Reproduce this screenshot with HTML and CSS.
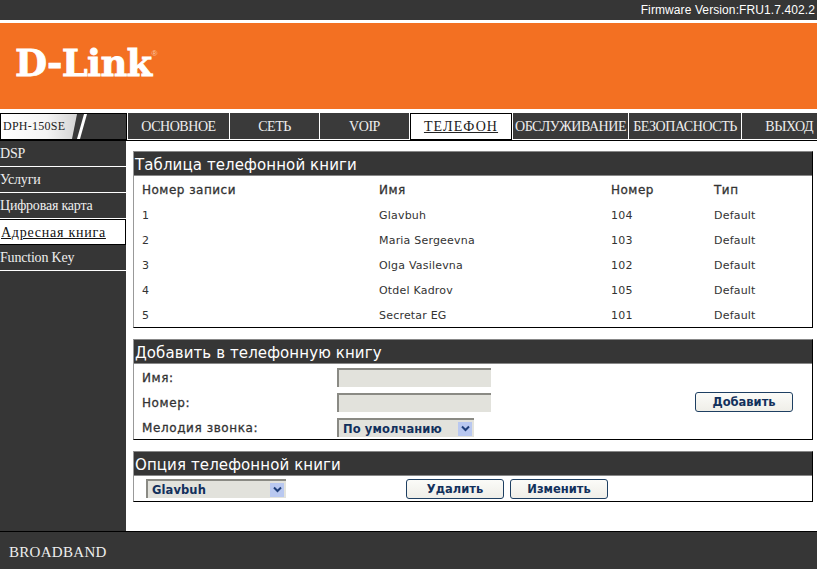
FILE: index.html
```html
<!DOCTYPE html>
<html lang="ru">
<head>
<meta charset="utf-8">
<title>D-Link DPH-150SE</title>
<link rel="stylesheet" href="styles.css">
</head>
<body>
<div class="page">
  <header class="topbar"><span class="firmware">Firmware Version:FRU1.7.402.2</span></header>
  <div class="banner">
    <span class="logo">D-Link<sup class="reg">®</sup></span>
  </div>
  <nav class="navrow">
    <div class="model">
      <svg class="model-art" width="125" height="25" viewBox="0 0 125 25">
        <defs><linearGradient id="modelfade" x1="0" x2="1" y1="0" y2="0"><stop offset="0" stop-color="#fff"/><stop offset=".6" stop-color="#f4f4f4"/><stop offset="1" stop-color="#d4d4d4"/></linearGradient></defs>
        <polygon points="0,0 76,0 71,25 0,25" fill="url(#modelfade)"/>
        <polygon points="83,0 86,0 79,25 76,25" fill="#fff"/>
      </svg>
      <span class="model-name">DPH-150SE</span>
    </div>
    <a class="tab w-a">ОСНОВНОЕ</a>
    <a class="tab w-b">СЕТЬ</a>
    <a class="tab w-c">VOIP</a>
    <a class="tab w-d active">ТЕЛЕФОН</a>
    <a class="tab w-e">ОБСЛУЖИВАНИЕ</a>
    <a class="tab w-f">БЕЗОПАСНОСТЬ</a>
    <a class="tab w-g">ВЫХОД</a>
  </nav>
  <div class="middle">
    <aside class="sidebar">
      <a class="side-item">DSP</a>
      <a class="side-item">Услуги</a>
      <a class="side-item">Цифровая карта</a>
      <a class="side-item current">Адресная книга</a>
      <a class="side-item">Function Key</a>
    </aside>
    <main class="content">
      <section class="panel panel-book">
        <h2 class="panel-title">Таблица телефонной книги</h2>
        <div class="book-row book-head"><span>Номер записи</span><span>Имя</span><span>Номер</span><span>Тип</span></div>
        <div class="book-row"><span>1</span><span>Glavbuh</span><span>104</span><span>Default</span></div>
        <div class="book-row"><span>2</span><span>Maria Sergeevna</span><span>103</span><span>Default</span></div>
        <div class="book-row"><span>3</span><span>Olga Vasilevna</span><span>102</span><span>Default</span></div>
        <div class="book-row"><span>4</span><span>Otdel Kadrov</span><span>105</span><span>Default</span></div>
        <div class="book-row"><span>5</span><span>Secretar EG</span><span>101</span><span>Default</span></div>
      </section>
      <section class="panel panel-add">
        <h2 class="panel-title">Добавить в телефонную книгу</h2>
        <div class="add-body">
          <div class="form-rows">
            <div class="form-row"><label class="form-label">Имя:</label><span class="field"></span></div>
            <div class="form-row"><label class="form-label">Номер:</label><span class="field"></span></div>
            <div class="form-row"><label class="form-label">Мелодия звонка:</label>
              <span class="select select-ring"><span class="select-text">По умолчанию</span><span class="arrow"><svg width="9" height="7" viewBox="0 0 9 7"><path d="M1 1.5 4.5 5 8 1.5" fill="none" stroke="#1f3f7a" stroke-width="2"/></svg></span></span>
            </div>
          </div>
          <button class="btn btn-add" type="button">Добавить</button>
        </div>
      </section>
      <section class="panel panel-opt">
        <h2 class="panel-title">Опция телефонной книги</h2>
        <div class="opt-body">
          <span class="select select-opt"><span class="select-text">Glavbuh</span><span class="arrow"><svg width="9" height="7" viewBox="0 0 9 7"><path d="M1 1.5 4.5 5 8 1.5" fill="none" stroke="#1f3f7a" stroke-width="2"/></svg></span></span>
          <button class="btn btn-del" type="button">Удалить</button>
          <button class="btn btn-edit" type="button">Изменить</button>
        </div>
      </section>
    </main>
  </div>
  <footer class="footer">BROADBAND</footer>
</div>
</body>
</html>
```

FILE: styles.css
```css
* { box-sizing: border-box; }
html, body { margin: 0; padding: 0; background: #fff; }
.page {
  width: 817px;
  height: 569px;
  display: flex;
  flex-direction: column;
  overflow: hidden;
  font-family: "DejaVu Sans", sans-serif;
  color: #333;
}
.topbar {
  height: 20px;
  flex: none;
  background: #363636;
  color: #fff;
  font: 12px/20px "Liberation Sans", sans-serif;
  letter-spacing: .1px;
  text-align: right;
  padding-right: 2px;
}
.banner {
  height: 86px;
  flex: none;
  margin-top: 3px;
  background: #f37022;
  padding: 25px 0 0 15px;
}
.logo {
  display: inline-block;
  color: #fff;
  font: 700 37px/30px "DejaVu Serif", serif;
  letter-spacing: -.7px;
  -webkit-text-stroke: .8px #fff;
}
.reg {
  font: 400 8px/8px "Liberation Sans", sans-serif;
  vertical-align: 20px;
  color: #f9c9a8;
  letter-spacing: 0;
  -webkit-text-stroke: 0;
}
.navrow {
  height: 28px;
  flex: none;
  margin-top: 4px;
  display: flex;
  border-bottom: 1px solid #000;
  font-family: "Liberation Serif", serif;
  font-size: 14px;
  letter-spacing: -.45px;
}
.model {
  width: 127px;
  height: 27px;
  flex: none;
  position: relative;
  background: #3a3a3a;
  border: 1px solid #000;
  overflow: hidden;
}
.model-art { position: absolute; left: 0; top: 0; }
.model-name {
  position: relative;
  display: block;
  padding-left: 2px;
  font: 12px/25px "Liberation Serif", serif;
  letter-spacing: .25px;
  color: #222;
}
.tab {
  height: 26px;
  flex: none;
  background: #3a3a3a;
  color: #eee;
  line-height: 27px;
  text-align: center;
  border-right: 1px solid #fff;
  white-space: nowrap;
}
.tab.active {
  background: #fff;
  color: #222;
  letter-spacing: 1.1px;
  text-decoration: underline;
  border: 1px solid #000;
  line-height: 26px;
  height: 27px;
}
.w-a { width: 102px; margin-left: 1px; }
.w-b { width: 90px; }
.w-c { width: 90px; }
.w-d { width: 102px; }
.w-e { width: 116px; margin-left: 1px; }
.w-f { width: 113px; }
.w-g { flex: 1; text-align: right; padding-right: 4px; border-right: 0; }
.middle { flex: 1; display: flex; min-height: 0; }
.sidebar {
  width: 126px;
  flex: none;
  background: #363636;
  font: 14px/26px "Liberation Serif", serif;
  letter-spacing: -.2px;
  color: #eee;
}
.side-item {
  display: block;
  height: 26px;
  line-height: 26px;
  border-bottom: 1px solid #fff;
  white-space: nowrap;
}
.side-item.current {
  background: #fff;
  color: #111;
  border: 1px solid #000;
  border-left: 0;
  padding-left: 1px;
  letter-spacing: .75px;
  text-decoration: underline;
  line-height: 25px;
}
.content {
  flex: 1;
  padding: 10px 4px 0 7px;
  display: flex;
  flex-direction: column;
  gap: 11px;
}
.panel {
  border: 1px solid #000;
  border-top-color: #888;
  border-left-color: #999;
}
.panel-title {
  margin: 0;
  height: 24px;
  background: #363636;
  color: #fff;
  font: 400 15px/26px "DejaVu Sans", sans-serif;
  letter-spacing: .1px;
  padding-left: 1px;
  border-bottom: 1px solid #888;
}
.panel-book { height: 177px; }
.panel-add { height: 101px; }
.panel-opt { height: 51px; }
.book-row {
  display: grid;
  grid-template-columns: 237px 232px 103px 1fr;
  height: 25px;
  padding-left: 8px;
  font-size: 11px;
  letter-spacing: .2px;
  line-height: 25px;
}
.book-head {
  margin-top: 2px;
  font-size: 12px;
  letter-spacing: .5px;
  -webkit-text-stroke: .3px #333;
}
.add-body { display: flex; }
.form-rows { flex: none; width: 360px; padding-top: 1px; }
.form-row { height: 25px; display: flex; align-items: center; padding-left: 8px; }
.form-label { width: 195px; font-size: 12px; -webkit-text-stroke: .3px #333; letter-spacing: .6px; }
.field {
  width: 154px;
  height: 19px;
  background: #e2e2dc;
  border-top: 2px solid #8a8a84;
  border-left: 2px solid #8a8a84;
}
.select {
  display: flex;
  align-items: center;
  justify-content: space-between;
  background: #e2e2dc;
  height: 19px;
  border-top: 2px solid #8a8a84;
  border-left: 2px solid #8a8a84;
  font-size: 11.5px;
  font-weight: 700;
  letter-spacing: .1px;
  color: #12305c;
  padding: 0 2px 0 4px;
}
.select-ring { width: 137px; }
.select-opt { width: 140px; }
.arrow {
  width: 14px;
  height: 14px;
  background: #b9c8f0;
  display: flex;
  align-items: center;
  justify-content: center;
}
.btn {
  height: 20px;
  padding: 0;
  border: 1px solid #1e3f62;
  border-radius: 3px;
  background: linear-gradient(#fbfbf8, #efeee8);
  font: 700 11.5px/18px "DejaVu Sans", sans-serif;
  color: #12305c;
}
.btn-add { width: 98px; margin: 28px 0 0 201px; }
.opt-body { display: flex; padding: 3px 0 0 12px; }
.btn-del { width: 98px; margin-left: 120px; }
.btn-edit { width: 98px; margin-left: 6px; }
.footer {
  height: 38px;
  flex: none;
  background: #363636;
  border-top: 1px solid #000;
  color: #eee;
  font: 15px/40px "Liberation Serif", serif;
  letter-spacing: .3px;
  padding-left: 9px;
}
```
